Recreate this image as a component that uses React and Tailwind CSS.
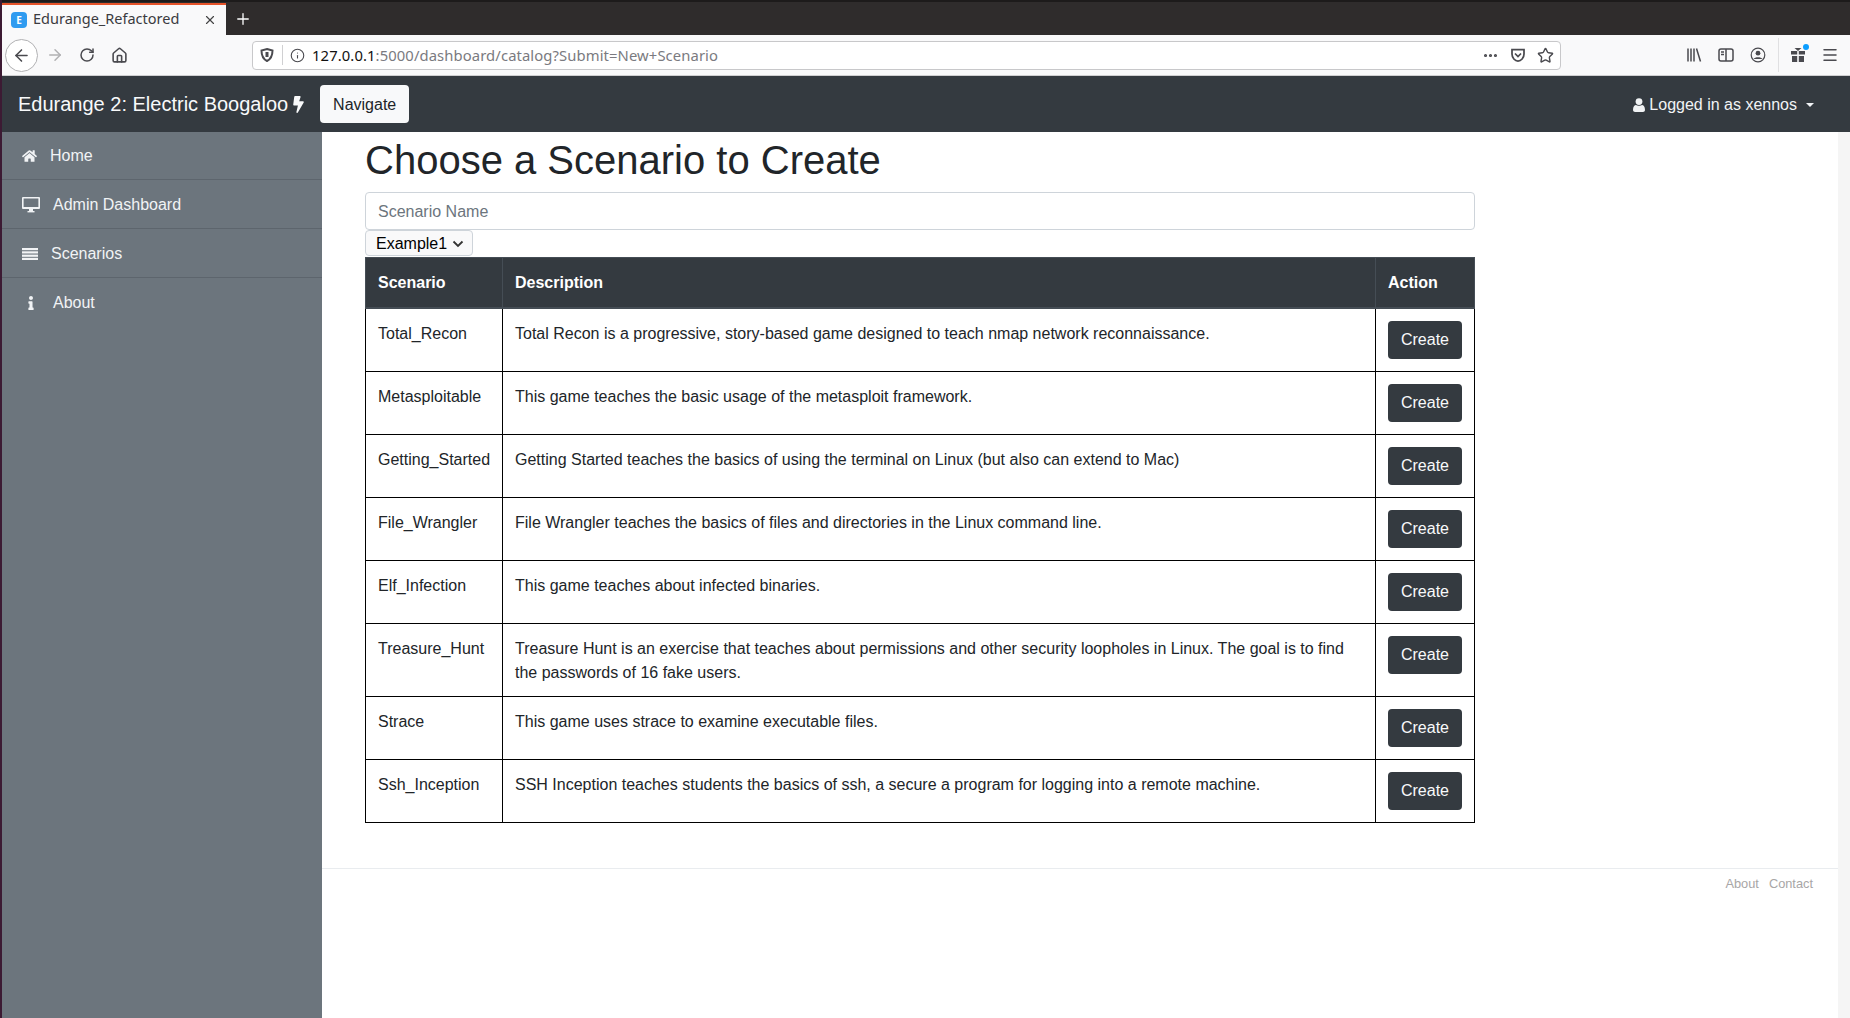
import React from "react";
import { FaHome, FaInfo, FaBolt } from "react-icons/fa";
import { ArrowLeft, ArrowRight, RotateCw, Home, Info, Star, X, Plus, Menu, MoreHorizontal } from "lucide-react";

const scenarios = [
  { name: "Total_Recon", desc: "Total Recon is a progressive, story-based game designed to teach nmap network reconnaissance." },
  { name: "Metasploitable", desc: "This game teaches the basic usage of the metasploit framework." },
  { name: "Getting_Started", desc: "Getting Started teaches the basics of using the terminal on Linux (but also can extend to Mac)" },
  { name: "File_Wrangler", desc: "File Wrangler teaches the basics of files and directories in the Linux command line." },
  { name: "Elf_Infection", desc: "This game teaches about infected binaries." },
  { name: "Treasure_Hunt", desc: "Treasure Hunt is an exercise that teaches about permissions and other security loopholes in Linux. The goal is to find the passwords of 16 fake users." },
  { name: "Strace", desc: "This game uses strace to examine executable files." },
  { name: "Ssh_Inception", desc: "SSH Inception teaches students the basics of ssh, a secure a program for logging into a remote machine." },
];

const ListIcon = () => (
  <svg viewBox="0 0 16 12" className="mr-[13px] h-3 w-4" fill="currentColor">
    <rect y="0" width="16" height="2.2" />
    <rect y="3.3" width="16" height="2.2" />
    <rect y="6.6" width="16" height="2.2" />
    <rect y="9.8" width="16" height="2.2" />
  </svg>
);

const DesktopIcon = () => (
  <svg viewBox="0 0 18 16" className="mr-[13px] h-4 w-[18px]" fill="currentColor">
    <path fillRule="evenodd" d="M1 0 H17 A1 1 0 0 1 18 1 V11 A1 1 0 0 1 17 12 H1 A1 1 0 0 1 0 11 V1 A1 1 0 0 1 1 0 Z M1.6 1.6 V10 H16.4 V1.6 Z" />
    <rect x="7" y="12" width="4" height="2" />
    <rect x="5.5" y="14" width="7" height="1.4" />
  </svg>
);

const sidebarItems = [
  { label: "Home", icon: <FaHome className="mr-[13px] h-[14px] w-[15px]" /> },
  { label: "Admin Dashboard", icon: <DesktopIcon /> },
  { label: "Scenarios", icon: <ListIcon /> },
  { label: "About", icon: <FaInfo className="mr-[13px] h-[14px] w-[18px]" /> },
];

const BrowserChrome = () => (
  <div className="font-['Noto_Sans',sans-serif]">
    {/* tab strip */}
    <div className="flex h-[35px] items-end border-t-2 border-[#1d1b1b] bg-[#2f2c2c]">
      <div className="flex h-[32px] w-[224px] items-center border-t-2 border-[#e5532a] bg-[#f9f9fa] px-[9px] text-[#3b3b3f]">
        <span className="flex h-4 w-4 items-center justify-center rounded-sm bg-[#2f9bf0] text-[10px] font-bold text-white">E</span>
        <span className="ml-[6px] flex-1 pb-[2px] text-[14.5px]">Edurange_Refactored</span>
        <X size={14} strokeWidth={2} className="text-[#444]" />
      </div>
      <div className="flex h-[32px] w-[34px] items-center justify-center text-white">
        <Plus size={18} strokeWidth={1.75} />
      </div>
    </div>
    {/* toolbar */}
    <div className="flex h-[41px] items-center border-b border-[#cfcfd1] bg-[#f9f9fa] text-[#4a4a4f]">
      <div className="ml-[3px] flex h-[33px] w-[33px] items-center justify-center rounded-full border border-[#b1b1b3] bg-white">
        <ArrowLeft size={19} strokeWidth={2} />
      </div>
      <ArrowRight size={18} strokeWidth={2} className="ml-[8px] text-[#b1b1b3]" />
      <RotateCw size={16} strokeWidth={2.25} className="ml-[15px]" />
      <Home size={17} strokeWidth={2.25} className="ml-[16px]" />
      <div className="ml-[124px] flex h-[29px] w-[1309px] items-center rounded border border-[#c8c8ca] bg-white pl-[6px] pr-[6px]">
        <svg viewBox="0 0 16 16" className="h-4 w-4" fill="none" stroke="#4a4a4f" strokeWidth="2">
          <path d="M8 2 L13.5 3.5 C13.5 9 12 12 8 14 C4 12 2.5 9 2.5 3.5 Z" />
          <path d="M8 5 V10" strokeWidth="3" />
        </svg>
        <span className="ml-[7px] h-5 w-px bg-[#d0d0d2]" />
        <Info size={15} strokeWidth={1.75} className="ml-[7px]" />
        <span className="ml-[7px] flex-1 text-[14.8px] tracking-[0.1px] text-[#7a7a80]">
          <span className="text-[#111]">127.0.0.1</span>:5000/dashboard/catalog?Submit=New+Scenario
        </span>
        <MoreHorizontal size={17} strokeWidth={2.5} />
        <svg viewBox="0 0 16 16" className="ml-[11px] h-4 w-4" fill="none" stroke="#4a4a4f" strokeWidth="1.75">
          <path d="M2 2.5 H14 V7 C14 11 11 14 8 14 C5 14 2 11 2 7 Z" />
          <path d="M5 6.5 L8 9.5 L11 6.5" />
        </svg>
        <Star size={17} strokeWidth={2} className="ml-[11px]" />
      </div>
      <div className="ml-[125px] flex items-center">
        <svg viewBox="0 0 16 16" className="h-4 w-4" fill="none" stroke="#4a4a4f" strokeWidth="1.5">
          <path d="M2 1.5 V14.5 M5 1.5 V14.5 M8 1.5 V14.5 M10.5 1.5 L14.5 14.5" />
        </svg>
        <svg viewBox="0 0 16 16" className="ml-[16px] h-4 w-4" fill="none" stroke="#4a4a4f" strokeWidth="1.5">
          <rect x="1" y="2" width="14" height="12" rx="2" />
          <path d="M8 2 V14 M3 5 H6 M3 7.5 H6" />
        </svg>
        <svg viewBox="0 0 16 16" className="ml-[16px] h-4 w-4" fill="#4a4a4f" stroke="#4a4a4f">
          <circle cx="8" cy="8" r="6.8" fill="none" strokeWidth="1.2" />
          <circle cx="8" cy="6.2" r="2.4" stroke="none" />
          <path d="M3.5 12 C5 9.5 11 9.5 12.5 12 Z" stroke="none" />
        </svg>
        <span className="ml-[12px] h-[34px] w-px bg-[#e0e0e2]" />
        <div className="relative ml-[11px]">
          <svg viewBox="0 0 16 16" className="h-4 w-4" fill="#4a4a4f">
            <rect x="1" y="4" width="6.2" height="3.5" />
            <rect x="8.8" y="4" width="6.2" height="3.5" />
            <rect x="2" y="9" width="5.2" height="6" />
            <rect x="8.8" y="9" width="5.2" height="6" />
            <path d="M4.5 1 L8 4 L11.5 1 Z" />
          </svg>
          <span className="absolute -right-[3px] -top-[3px] h-[6px] w-[6px] rounded-full bg-[#0a9dff]" />
        </div>
        <Menu size={18} strokeWidth={2} className="ml-[15px]" />
      </div>
    </div>
  </div>
);

const App = () => {
  return (
    <div className="flex h-screen w-full overflow-hidden bg-white font-['Liberation_Sans',sans-serif] text-base text-[#212529]">
      <div className="w-0.5 shrink-0 bg-[#3c1a33]" />
      <div className="flex min-w-0 flex-1 flex-col">
        <BrowserChrome />

        <nav className="flex h-[56px] shrink-0 items-center bg-[#343a40] text-[#f8f9fa]">
          <div className="ml-4 flex items-center text-xl">
            Edurange 2: Electric Boogaloo
            <FaBolt className="ml-[5px] h-[17px] w-[11px]" />
          </div>
          <button className="ml-4 h-[38px] w-[89px] rounded bg-[#f8f9fa] pt-px text-[#212529]">Navigate</button>
          <div className="ml-auto mr-[36px] flex items-center pt-px text-[#f1f3f5]">
            <svg viewBox="0 0 12 14" className="h-[14px] w-3" fill="currentColor">
              <circle cx="6" cy="3.6" r="3.4" />
              <path d="M0 12 C0 8.5 1.5 7 3 7 C4 8 8 8 9 7 C10.5 7 12 8.5 12 12 C12 13.3 11 14 10 14 H2 C1 14 0 13.3 0 12 Z" />
            </svg>
            <span className="ml-[4px]">Logged in as xennos</span>
            <span className="ml-[9px] h-0 w-0 border-x-[4.8px] border-t-[4.8px] border-x-transparent border-t-current" />
          </div>
        </nav>

        <div className="flex min-h-0 flex-1">
          <aside className="w-[320px] shrink-0 bg-[#6c757d] text-[#f1f3f5]">
            {sidebarItems.map((item) => (
              <div key={item.label} className="flex h-[49px] items-center border-b border-[#5d656d] pl-5 first:h-[48px] not-first:pt-px last:border-b-0">
                {item.icon}
                <span>{item.label}</span>
              </div>
            ))}
          </aside>

          <main className="flex min-w-0 flex-1 flex-col">
            <div className="pl-[43px] pt-1">
              <h1 className="mb-2 text-[40px] leading-[48px] font-normal">Choose a Scenario to Create</h1>
              <div className="w-[1110px]">
                <input
                  placeholder="Scenario Name"
                  className="block h-[38px] w-full rounded border border-[#ced4da] px-3 pt-[2px] placeholder:text-[#6c757d]"
                />
                <div className="flex h-[27px] items-start">
                  <button className="flex h-[26px] w-[108px] items-center rounded border border-[#ced4da] bg-[#f9f9fa] pl-[10px] pt-px text-black">
                    Example1
                    <svg viewBox="0 0 12 12" className="ml-[5px] h-3 w-3" fill="none" stroke="#333" strokeWidth="1.8">
                      <path d="M1.5 3.5 L6 8 L10.5 3.5" />
                    </svg>
                  </button>
                </div>
                <table className="w-[1109px] table-fixed border-collapse">
                  <colgroup>
                    <col className="w-[137px]" />
                    <col className="w-[873px]" />
                    <col className="w-[99px]" />
                  </colgroup>
                  <thead>
                    <tr className="h-[50px] bg-[#343a40] text-left font-bold text-white">
                      <th className="border border-b-2 border-[#454d55] px-3 pt-px align-middle">Scenario</th>
                      <th className="border border-b-2 border-[#454d55] px-3 pt-px align-middle">Description</th>
                      <th className="border border-b-2 border-[#454d55] px-3 pt-px align-middle">Action</th>
                    </tr>
                  </thead>
                  <tbody>
                    {scenarios.map((s) => (
                      <tr key={s.name}>
                        <td className="border border-black px-3 pb-[11px] pt-[13px] align-top">{s.name}</td>
                        <td className="border border-black px-3 pb-[11px] pt-[13px] align-top">{s.desc}</td>
                        <td className="border border-black p-3 align-top">
                          <button className="block h-[38px] w-[74px] rounded bg-[#343a40] text-center text-[#f8f9fa]">Create</button>
                        </td>
                      </tr>
                    ))}
                  </tbody>
                </table>
              </div>
            </div>

            <footer className="mt-[45px] flex justify-end gap-[10px] border-t border-[#e9ecef] pr-[25px] pt-[5px] text-[12.8px] text-[#a8a6a6]">
              <span>About</span>
              <span>Contact</span>
            </footer>
          </main>

          <div className="w-3 shrink-0 bg-[#f5f5f5]" />
        </div>
      </div>
    </div>
  );
};

export default App;
